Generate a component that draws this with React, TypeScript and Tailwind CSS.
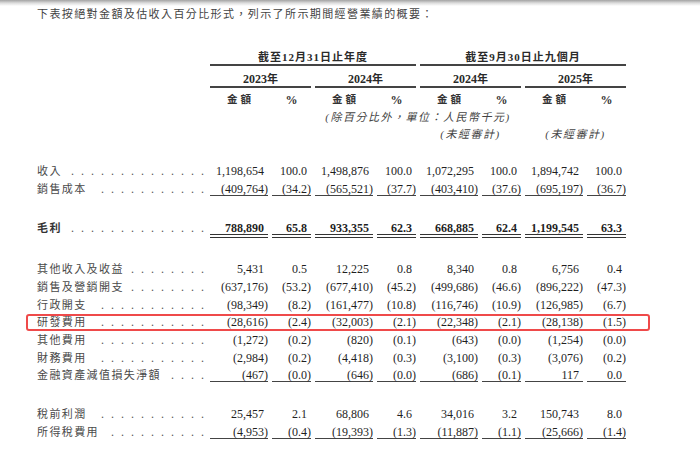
const COLS = "grid w-[589px] grid-cols-[169px_58px_39px_58px_39px_58px_39px_58px_39px] gap-x-[4px]"

type Row = {
  label: string
  values: string[]
  line?: "single" | "double"
  bold?: boolean
  gap?: string
  mark?: boolean
}

const rows: Row[] = [
  { label: "收入", values: ["1,198,654", "100.0", "1,498,876", "100.0", "1,072,295", "100.0", "1,894,742", "100.0"], gap: "mt-[21.2px]" },
  { label: "銷售成本", values: ["(409,764)", "(34.2)", "(565,521)", "(37.7)", "(403,410)", "(37.6)", "(695,197)", "(36.7)"], line: "single" },
  { label: "毛利", values: ["788,890", "65.8", "933,355", "62.3", "668,885", "62.4", "1,199,545", "63.3"], line: "double", bold: true, gap: "mt-[21.8px]" },
  { label: "其他收入及收益", values: ["5,431", "0.5", "12,225", "0.8", "8,340", "0.8", "6,756", "0.4"], gap: "mt-[23.4px]" },
  { label: "銷售及營銷開支", values: ["(637,176)", "(53.2)", "(677,410)", "(45.2)", "(499,686)", "(46.6)", "(896,222)", "(47.3)"] },
  { label: "行政開支", values: ["(98,349)", "(8.2)", "(161,477)", "(10.8)", "(116,746)", "(10.9)", "(126,985)", "(6.7)"] },
  { label: "研發費用", values: ["(28,616)", "(2.4)", "(32,003)", "(2.1)", "(22,348)", "(2.1)", "(28,138)", "(1.5)"], mark: true },
  { label: "其他費用", values: ["(1,272)", "(0.2)", "(820)", "(0.1)", "(643)", "(0.0)", "(1,254)", "(0.0)"] },
  { label: "財務費用", values: ["(2,984)", "(0.2)", "(4,418)", "(0.3)", "(3,100)", "(0.3)", "(3,076)", "(0.2)"] },
  { label: "金融資產減值損失淨額", values: ["(467)", "(0.0)", "(646)", "(0.0)", "(686)", "(0.1)", "117", "0.0"], line: "single" },
  { label: "稅前利潤", values: ["25,457", "2.1", "68,806", "4.6", "34,016", "3.2", "150,743", "8.0"], gap: "mt-[21.1px]" },
  { label: "所得稅費用", values: ["(4,953)", "(0.4)", "(19,393)", "(1.3)", "(11,887)", "(1.1)", "(25,666)", "(1.4)"], line: "single" },
]

// dot leaders end at the same spot on every row, one dot per 10px
const dotsFor = (label: string) => {
  const end = 37 + label.length * 12.4
  const n = Math.floor((204 - end - 8) / 10) + 1
  return ".".repeat(Math.max(n, 1))
}

function Cell({ v, line, bold }: { v: string; line?: "single" | "double"; bold?: boolean }) {
  const neg = v.startsWith("(")
  const border =
    line === "single" ? "border-b border-[#444]" : line === "double" ? "border-b-4 border-double border-[#333]" : ""
  return (
    <div className={`pt-[2.9px] leading-[12px] text-right whitespace-nowrap text-[#1f1f1f] ${border} ${bold ? "font-bold" : ""}`}>
      {v}
      {!neg && <span className="invisible">)</span>}
    </div>
  )
}

function DataRow({ row }: { row: Row }) {
  return (
    <div className={`relative ${COLS} h-[17.7px] items-start ${row.gap || ""}`}>
      <div className="flex pt-[2.9px] leading-[12px]">
        <span className={`whitespace-nowrap text-[11px] tracking-[1.4px] text-[#4a4a4a] ${row.bold ? "font-bold text-[#333]" : ""}`}>
          {row.label}
        </span>
        <span className="ml-auto -mr-[5px] whitespace-nowrap text-[12px] tracking-[7px] text-[#555]">
          {dotsFor(row.label)}
        </span>
      </div>
      {row.values.map((v, i) => (
        <Cell key={i} v={v} line={row.line} bold={row.bold} />
      ))}
      {row.mark && (
        <div className="absolute left-[-11px] right-[-24px] top-[0.5px] bottom-0 border-2 border-[#ef4a4a] rounded-[3px]" />
      )}
    </div>
  )
}

export default function App() {
  return (
    <div className="w-[700px] h-[454px] bg-white overflow-hidden font-['Liberation_Serif','Noto_Sans_CJK_TC',serif] text-[12px]">
      <div className="h-[6px] bg-linear-to-b from-[#a3a3a3] via-[#dcdcdc] to-white" />
      <div className="pl-[37px] h-[18px] leading-[18px] text-[11px] tracking-[1.4px] text-[#444] whitespace-nowrap -mt-[1px]">
        下表按絕對金額及估收入百分比形式，列示了所示期間經營業績的概要：
      </div>

      <div className="pl-[37px]">
        {/* period headers */}
        <div className={`${COLS} mt-[28px]`}>
          <div />
          <div className="col-span-4 text-center font-bold text-[11px] tracking-[1px] leading-[12px] pb-[1px] border-b-2 border-[#444] text-[#2a2a2a]">
            截至12月31日止年度
          </div>
          <div className="col-span-4 text-center font-bold text-[11px] tracking-[1px] leading-[12px] pb-[1px] border-b-2 border-[#444] text-[#2a2a2a]">
            截至9月30日止九個月
          </div>
        </div>

        {/* years */}
        <div className={`${COLS} mt-[7px]`}>
          <div />
          {["2023", "2024", "2024", "2025"].map((y, i) => (
            <div
              key={i}
              className="col-span-2 text-center font-bold text-[12px] leading-[12px] pb-[1px] border-b-2 border-[#444] text-[#2a2a2a]"
            >
              {y}
              <span className="text-[11px]">年</span>
            </div>
          ))}
        </div>

        {/* column labels */}
        <div className={`${COLS} mt-[5px] leading-[14px] font-bold text-[#333]`}>
          <div />
          {[0, 1, 2, 3].map((i) => (
            <div key={i} className="contents">
              <div className="text-center text-[10.5px] tracking-[3px] pl-[3px]">金額</div>
              <div className="text-center text-[12px]">%</div>
            </div>
          ))}
        </div>

        <div className={`${COLS} mt-[3px] leading-[14px]`}>
          <div className="col-start-2 col-span-8 text-center italic text-[11px] tracking-[1.5px] text-[#444]">
            (除百分比外，單位：人民幣千元)
          </div>
        </div>

        <div className={`${COLS} mt-[3px] leading-[14px] italic text-[11px] tracking-[1.5px] text-[#444]`}>
          <div className="col-start-6 col-span-2 text-center">(未經審計)</div>
          <div className="col-start-8 col-span-2 text-center">(未經審計)</div>
        </div>

        {rows.map((r) => (
          <DataRow key={r.label} row={r} />
        ))}
      </div>
    </div>
  )
}
